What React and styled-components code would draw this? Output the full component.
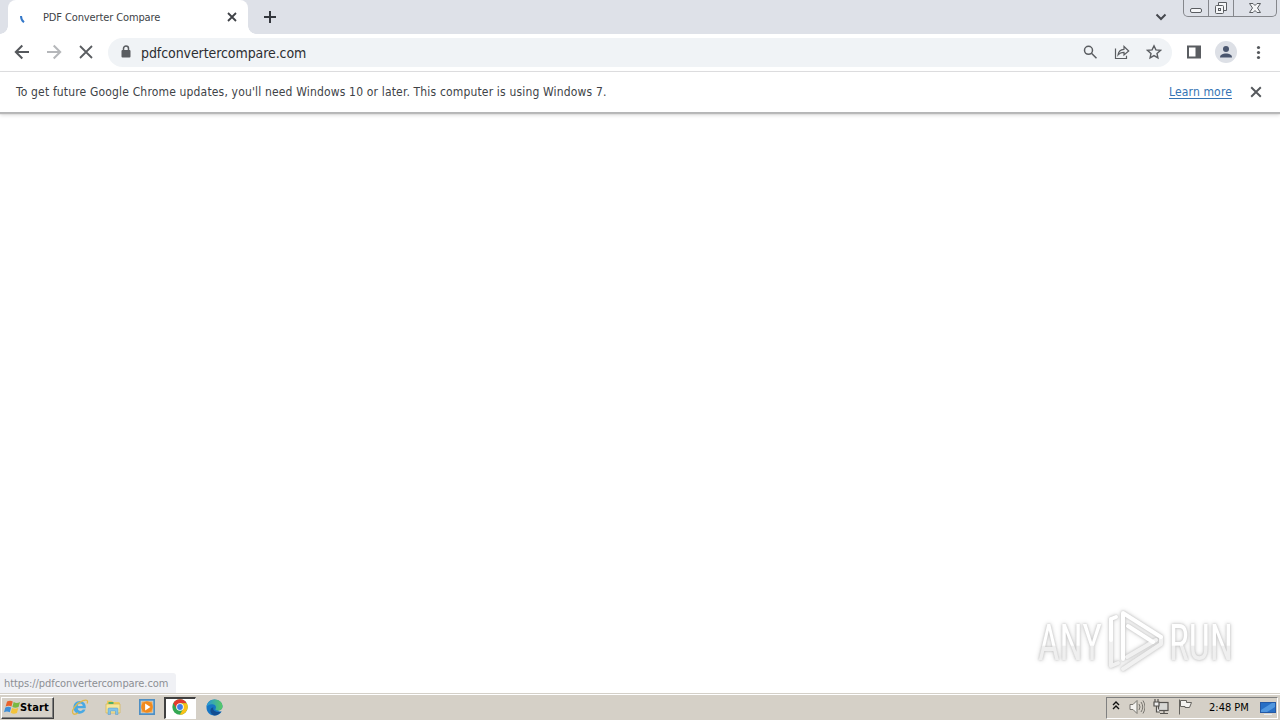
import React from 'react';
import styled, { createGlobalStyle, css } from 'styled-components';

const Global = createGlobalStyle`
  * { box-sizing: border-box; }
  body { margin: 0; overflow: hidden; background: #fff; }
`;

const Desktop = styled.div`
  position: relative;
  display: flex;
  flex-direction: column;
  width: 1280px;
  height: 720px;
  font-family: 'DejaVu Sans Condensed', 'DejaVu Sans', sans-serif;
  font-stretch: condensed;
  color: #404347;
`;

const Icon = styled.svg.attrs({ 'aria-hidden': true })`
  display: block;
  flex: none;
  width: ${p => p.$w || 16}px;
  height: ${p => p.$h || p.$w || 16}px;
  fill: none;
  stroke: ${p => p.$color || '#5a5d61'};
  stroke-width: ${p => p.$stroke || 2};
`;

const TabStrip = styled.header`
  display: flex;
  height: 34px;
  padding-left: 8px;
  background: #dee1e8;
`;

const Tab = styled.div`
  position: relative;
  display: flex;
  align-items: center;
  width: 240px;
  height: 34px;
  padding: 0 10px 0 11px;
  background: #fff;
  border-radius: 8px 8px 0 0;
  &::before, &::after {
    content: '';
    position: absolute;
    bottom: 0;
    width: 8px;
    height: 8px;
  }
  &::before { left: -8px; background: radial-gradient(circle at 0 0, #dee1e8 7.5px, #fff 8px); }
  &::after { right: -8px; background: radial-gradient(circle at 100% 0, #dee1e8 7.5px, #fff 8px); }
`;

const Label = styled.span`
  white-space: nowrap;
  line-height: 16px;
  font-size: ${p => p.$size || 11}px;
  letter-spacing: ${p => p.$track || 0}px;
`;

const TabTitle = styled(Label)`
  flex: 1;
  padding: 2px 0 0 8px;
`;

const NewTab = styled.div`
  margin: 10px 0 0 15px;
`;

const TabSearch = styled.div`
  margin: 12px 16px 0 auto;
`;

const WindowButtons = styled.div`
  display: flex;
  width: 94px;
  height: 17px;
  margin-right: 3px;
  border: 1px solid #85878c;
  border-top: 0;
  border-radius: 0 0 5px 5px;
`;

const WindowButton = styled.div`
  display: flex;
  align-items: center;
  justify-content: center;
  width: ${p => p.$w}px;
  height: 16px;
  & + & { border-left: 1px solid #85878c; }
`;

const Toolbar = styled.nav`
  display: flex;
  align-items: center;
  height: 38px;
  padding: 0 14px 1px;
  border-bottom: 1px solid #dcdddf;
  background: #fff;
`;

const NavButtons = styled.div`
  display: flex;
  gap: 16px;
  margin-right: 14px;
`;

const Omnibox = styled.div`
  display: flex;
  align-items: center;
  width: 1064px;
  height: 29px;
  padding: 0 10px 0 12px;
  border-radius: 15px;
  background: #f0f3f6;
`;

const Url = styled(Label)`
  flex: 1;
  padding: 1px 0 0 9px;
  color: #2c2e32;
`;

const OmniboxActions = styled.div`
  display: flex;
  gap: 16px;
`;

const Extras = styled.div`
  display: flex;
  align-items: center;
  gap: 13px;
  padding-left: 14px;
`;

const Avatar = styled.div`
  display: grid;
  place-items: center;
  width: 22px;
  height: 22px;
  border-radius: 50%;
  background: #dde0e6;
`;

const InfoBar = styled.section`
  display: flex;
  align-items: center;
  height: 41px;
  padding: 0 18px 1px 16px;
  border-bottom: 1px solid #b5b6b7;
  box-shadow: 0 1px 1px #b9b9b9, 0 2px 4px #d8d8d8;
`;

const Message = styled(Label)`
  flex: 1;
`;

const Link = styled(Label)`
  margin-right: 18px;
  color: #3474b4;
  text-decoration: underline;
  text-underline-offset: 2px;
`;

const Page = styled.main`
  display: flex;
  flex: 1;
  flex-direction: column;
  align-items: flex-start;
  justify-content: flex-end;
`;

const StatusBubble = styled.div`
  display: flex;
  align-items: center;
  width: 176px;
  height: 20px;
  padding: 1px 0 0 4px;
  border-radius: 0 3px 0 0;
  background: #f0f1f5;
  color: #8c8f94;
`;

const Watermark = styled.svg`
  position: absolute;
  left: 1030px;
  top: 604px;
  width: 210px;
  height: 74px;
  overflow: visible;
  filter: drop-shadow(0 0 1px #c2c2c2) drop-shadow(0 0 2px #d6d6d6);
  text {
    font-family: Roboto, sans-serif;
    font-stretch: condensed;
    font-size: 50px;
    fill: url(#wordFill);
  }
`;

const Taskbar = styled.footer`
  display: flex;
  align-items: center;
  height: 27px;
  padding: 1px 2px 0 1px;
  border-top: 1px solid #d4d0c8;
  box-shadow: inset 0 1px #fff;
  background: #d5d0c7;
  color: #000;
`;

const StartButton = styled.div`
  display: flex;
  align-items: center;
  width: 53px;
  height: 22px;
  padding: 0 0 1px 2px;
  border: 1px solid;
  border-color: #fff #404040 #404040 #fff;
  box-shadow: inset -1px -1px #808080;
  font-weight: bold;
`;

const StartLabel = styled(Label)`
  padding-top: 1px;
`;

const Launchers = styled.div`
  display: flex;
  margin-left: 9px;
`;

const Launcher = styled.div`
  display: grid;
  place-items: center;
  width: ${p => p.$w || 34}px;
  height: 22px;
  padding-bottom: 1px;
  border: 1px solid transparent;
  ${p => p.$active && css`
    padding: 0 2px 2px 0;
    border-width: 2px 1px 1px 2px;
    border-color: #404040 #fff #fff #404040;
    background: #fff;
  `}
`;

const Tray = styled.div`
  display: flex;
  align-items: center;
  width: 172px;
  height: 22px;
  margin-left: auto;
  padding-left: 5px;
  border: 1px solid;
  border-color: #808080 #fff #fff #808080;
`;

const TrayIcons = styled.div`
  display: flex;
  align-items: center;
  gap: 8px;
  width: 97px;
  padding-bottom: 1px;
  svg:first-child { margin: 0 1px 3px 0; }
`;

const Clock = styled(Label)`
  width: 51px;
`;

const Cross = ({ size = 8, ...rest }) => (
  <Icon $w={size} viewBox="0 0 10 10" {...rest}><path d="M1 1l8 8M9 1L1 9" /></Icon>
);

const Arrow = ({ flip, color }) => (
  <Icon viewBox="0 0 16 16" $color={color}>
    <path transform={flip ? 'translate(16 0) scale(-1 1)' : undefined} d="M15 8H2M8.3 1.5L1.8 8l6.5 6.5" />
  </Icon>
);

const WindowsFlag = () => (
  <Icon $w={16} viewBox="0 .4 15.7 14.8" $color="none">
    <path d="M3 2.5Q6 .7 8.6 2.4L7.3 7.2Q4.6 5.7 1.6 7.3z" fill="#e8622c" />
    <path d="M9.5 2.9Q12.5 4.7 15.7 2.9L14.3 7.7Q11.2 9.2 8.2 7.7z" fill="#79b943" />
    <path d="M1.3 8.3Q4.4 6.8 7 8.3L5.7 13Q3 11.4 0 13z" fill="#3e8fd8" />
    <path d="M7.9 8.7Q11 10.3 14 8.7L12.7 13.6Q9.5 15.1 6.6 13.5z" fill="#f3c33b" />
  </Icon>
);

const Explorer = () => (
  <Icon $w={18} viewBox="0 0 18 18" $color="none">
    <path d="M14.8 10.2H6.7c.2 3 4 3.7 5.1 1.4h2.7c-.9 2.7-3.1 4.1-5.7 4.1-4 0-6.4-2.8-6.4-6.3 0-3.6 2.5-6.5 6.3-6.5 4 0 6.4 2.9 6.1 7.3zM6.8 7.9h4.9c-.2-3.2-4.7-3.2-4.9 0z" fill="#49a9e3" />
    <path d="M2.5 15.9C-.8 13.2 5.5 5.1 12 2.7c4.2-1.6 5.2.1 4.1 2.8M2.5 15.9c1 .7 3 0 4.6-1" fill="none" stroke="#e0b94a" strokeWidth="1.3" />
  </Icon>
);

const Folder = () => (
  <Icon $w={17} viewBox="0 0 17 17" $color="none">
    <path d="M2 4V1.7h5L8 3h6l1 1v10H2z" fill="#eecb5c" />
    <path d="M1 5h14v9H1z" fill="#f7e79a" stroke="#d6b650" strokeWidth=".7" />
    <path d="M3.5 4h5" stroke="#50b06a" />
    <path d="M3 15.5V10q0-1 1-1h8q1 0 1 1v5.5h-2.5V12h-5v3.5z" fill="#83c3e7" stroke="#5797c5" strokeWidth=".5" />
  </Icon>
);

const Player = () => (
  <Icon $w={16} viewBox="0 0 16 16" $color="none">
    <path d="M.7 .7h14.6v14.6H.7z" fill="#b9d9ef" stroke="#4f8fc3" />
    <path d="M2.5 2.5h11v11h-11z" fill="#f5a347" />
    <circle cx="8" cy="8" r="5.8" fill="#f18a1d" />
    <path d="M6.1 4.6v6.8L11.5 8z" fill="#fff" />
  </Icon>
);

const Chrome = () => (
  <Icon $w={16} viewBox="0 0 16 16" $color="none">
    <circle cx="8" cy="8" r="7.7" fill="#34a853" />
    <path d="M1.3 4.2A7.7 7.7 0 0 1 14.7 4.3H8L4.8 9.8z" fill="#e33b2e" />
    <path d="M14.7 4.3A7.7 7.7 0 0 1 7.7 15.7L11.2 9.9 8 4.3z" fill="#fbc116" />
    <circle cx="8" cy="8" r="3.8" fill="#fff" />
    <circle cx="8" cy="8" r="2.9" fill="#3f7de8" />
  </Icon>
);

const Edge = () => (
  <Icon $w={17} viewBox="0 0 17 17" $color="none">
    <defs>
      <linearGradient id="edgeTop"><stop stopColor="#2794da" /><stop offset="1" stopColor="#58cb62" /></linearGradient>
    </defs>
    <path d="M.5 8.5C.5 4 4 .5 8.5.5s8 3.3 8 6.700c0 3-2.200 4.300-4.700 4.300 1 1.200 2.700 1.300 4 .8-1.200 2.600-4 4.200-7.300 4.200-4.500 0-8-3.500-8-8z" fill="#1675c4" />
    <path d="M.6 8C1 3.400 4.500.5 8.500.5c4.900 0 8 3.300 8 6.700 0 3-2.200 4.300-4.700 4.300-2 0-2.900-.8-2.200-1.700C10.800 8 9.500 5.500 6.500 5.200 3.500 5 1.200 6.500.6 8z" fill="url(#edgeTop)" />
    <path d="M7.400 8.300c-1 2.600 1.600 5.800 7.600 4.500-1.800 2.900-5 4-7.800 3.500C3 13 4 9 7.400 8.300z" fill="#124d91" />
  </Icon>
);

function AnyRun() {
  return (
    <Watermark viewBox="0 0 210 74">
      <defs>
        <linearGradient id="wordFill" x1="0" y1="0" x2="0" y2="1">
          <stop offset=".54" stopColor="#fff" /><stop offset=".55" stopColor="#efefef" />
        </linearGradient>
      </defs>
      <text x="8" y="56" textLength="64" lengthAdjust="spacingAndGlyphs">ANY</text>
      <g fill="none" strokeWidth="4" strokeLinejoin="round" strokeLinecap="round">
        <path d="M81 15V62l7-3M97 53l29-17M93 65l38-25V33" stroke="#f1f1f1" />
        <path d="M81 36V15l5-2" stroke="#fff" />
        <path d="M93 55V9l38 24M98 22l25 16" stroke="#fff" />
      </g>
      <text x="139" y="56" textLength="64" lengthAdjust="spacingAndGlyphs">RUN</text>
    </Watermark>
  );
}

export default function App() {
  return (
    <>
      <Global />
      <Desktop>
        <TabStrip>
          <Tab>
            <Icon viewBox="0 0 16 16" $color="#3478c9"><path d="M2 7q0 4 3 6.2" /></Icon>
            <TabTitle $track={-0.12}>PDF Converter Compare</TabTitle>
            <Cross size={12} viewBox="-1 -1 12 12" $stroke={1.8} $color="#3f4247" />
          </Tab>
          <NewTab><Icon $w={14} viewBox="0 0 14 14" $color="#34373d"><path d="M7 1v12M1 7h12" /></Icon></NewTab>
          <TabSearch><Icon $w={12} $h={10} viewBox="0 0 12 10" $color="#45484e"><path d="M1.5 2.5L6 7l4.5-4.5" /></Icon></TabSearch>
          <WindowButtons>
            <WindowButton $w={24}><Icon $w={14} viewBox="0 0 14 14" $stroke={1}><rect x="1.5" y="7.5" width="11" height="4" rx="1.5" fill="#f5f6f8" /></Icon></WindowButton>
            <WindowButton $w={25}><Icon $w={14} viewBox="0 0 14 14" $stroke={1}><path d="M4.5 4.5v-3h8v8h-3" fill="#f5f6f8" /><rect x="1.5" y="4.5" width="8" height="8" rx="1" fill="#f5f6f8" /><rect x="4.5" y="7.5" width="2" height="2" /></Icon></WindowButton>
            <WindowButton $w={43}><Icon $w={14} viewBox="0 0 14 14" $stroke={1}><path d="M1.5 2.5h3.5l2 2 2-2h3.5L9.5 7l3 4.500H9l-2-2-2 2H1.500L4.500 7z" fill="#f5f6f8" /></Icon></WindowButton>
          </WindowButtons>
        </TabStrip>

        <Toolbar>
          <NavButtons>
            <Arrow color="#55585c" />
            <Arrow flip color="#b5b7ba" />
            <Icon viewBox="0 0 16 16" $stroke={1.8}><path d="M2 2l12 12M14 2L2 14" /></Icon>
          </NavButtons>
          <Omnibox>
            <Icon $w={12} $h={14} viewBox="0 0 12 14" $stroke={1.5}><rect x="1.5" y="5" width="9" height="7.5" rx="1" fill="#5a5d61" stroke="none" /><path d="M3.5 6V3.5a2.5 2.5 0 0 1 5 0V6" /></Icon>
            <Url $size={14} $track={-0.08}>pdfconvertercompare.com</Url>
            <OmniboxActions>
              <Icon viewBox="0 0 16 16" $stroke={1.5}><circle cx="6.5" cy="6.3" r="4" /><path d="M9.5 9.3l5 5" /></Icon>
              <Icon viewBox="0 0 16 16" $stroke={1.2}><path d="M1.5 4.5v10h11v-2.7" /><path d="M4 11c.4-3.8 2.5-5.5 6-5.7V2.5L14.7 7 10 11V8.300c-2.700 0-4.500.8-6 2.700z" /></Icon>
              <Icon viewBox="0 0 16 16" $stroke={1.4}><path d="M8 1.8l1.9 4.1 4.5.5-3.4 3 .9 4.400L8 11.600l-3.900 2.200.9-4.400-3.400-3 4.500-.5z" /></Icon>
            </OmniboxActions>
          </Omnibox>
          <Extras>
            <Icon viewBox="0 0 16 16"><rect x="2" y="2.5" width="12" height="11" /><path d="M11.5 2.5v11" strokeWidth="4" /></Icon>
            <Avatar><Icon $w={14} viewBox="0 0 14 14" $color="none"><circle cx="7" cy="4" r="3" fill="#4a566e" /><path d="M1 12.5C1 9.5 4 8.5 7 8.5s6 1 6 4z" fill="#4a566e" /></Icon></Avatar>
            <Icon viewBox="0 0 16 16" $color="none"><g fill="#55585c"><circle cx="8.5" cy="3.5" r="1.6" /><circle cx="8.5" cy="8.5" r="1.6" /><circle cx="8.5" cy="13.5" r="1.6" /></g></Icon>
          </Extras>
        </Toolbar>

        <InfoBar>
          <Message $size={12} $track={0.165}>To get future Google Chrome updates, you'll need Windows 10 or later. This computer is using Windows 7.</Message>
          <Link $size={12} $track={0.15}>Learn more</Link>
          <Cross size={12} viewBox="0 0 10 10" $stroke={1.6} $color="#55585c" />
        </InfoBar>

        <Page>
          <StatusBubble><Label $track={-0.08}>https://pdfconvertercompare.com</Label></StatusBubble>
        </Page>
        <AnyRun />

        <Taskbar>
          <StartButton><WindowsFlag /><StartLabel $track={0.15}>Start</StartLabel></StartButton>
          <Launchers>
            <Launcher><Explorer /></Launcher>
            <Launcher $w={33}><Folder /></Launcher>
            <Launcher><Player /></Launcher>
            <Launcher $w={32} $active><Chrome /></Launcher>
            <Launcher $w={36}><Edge /></Launcher>
          </Launchers>
          <Tray>
            <TrayIcons>
              <Icon $w={8} $h={12} viewBox="0 0 8 12" $color="#111" $stroke={1.4}><path d="M1 5l3-3 3 3M1 9l3-3 3 3" /></Icon>
              <Icon viewBox="0 0 16 16" $stroke={1} $color="#77756f"><path d="M1 5.5h3l4-4v13l-4-4H1z" fill="#f4f3f0" /><path d="M10 5q2 3 0 6M12 3q3.5 5 0 10M14 1.5q4 6.5 0 13" /></Icon>
              <Icon viewBox="0 0 16 16" $stroke={1.2} $color="#55534f"><rect x="5.5" y="3.5" width="9.5" height="8" fill="#d8d8d5" /><path d="M7 14.5h8M11 12v2M2 0v3M5 0v3M1 3h5v4H1zM3.5 7v6H7" fill="#eee" /></Icon>
              <Icon viewBox="0 0 16 16" $stroke={1} $color="#66645f"><path d="M2.5 15.5V.5" /><path d="M3.5 1.5h6v2h5l-2 5H8v-1H3.5z" fill="#f4f3f0" /></Icon>
            </TrayIcons>
            <Clock>2:48 PM</Clock>
            <Icon $w={16} viewBox="0 0 16 16" $stroke={1} $color="#2459a5"><rect x=".5" y="2.5" width="15" height="10" fill="#286fc5" /><path d="M1 10L12 3h3v4L7 12H1z" fill="#5197df" stroke="none" /><path d="M4 14.5h8" stroke="#e8edf3" /></Icon>
          </Tray>
        </Taskbar>
      </Desktop>
    </>
  );
}
